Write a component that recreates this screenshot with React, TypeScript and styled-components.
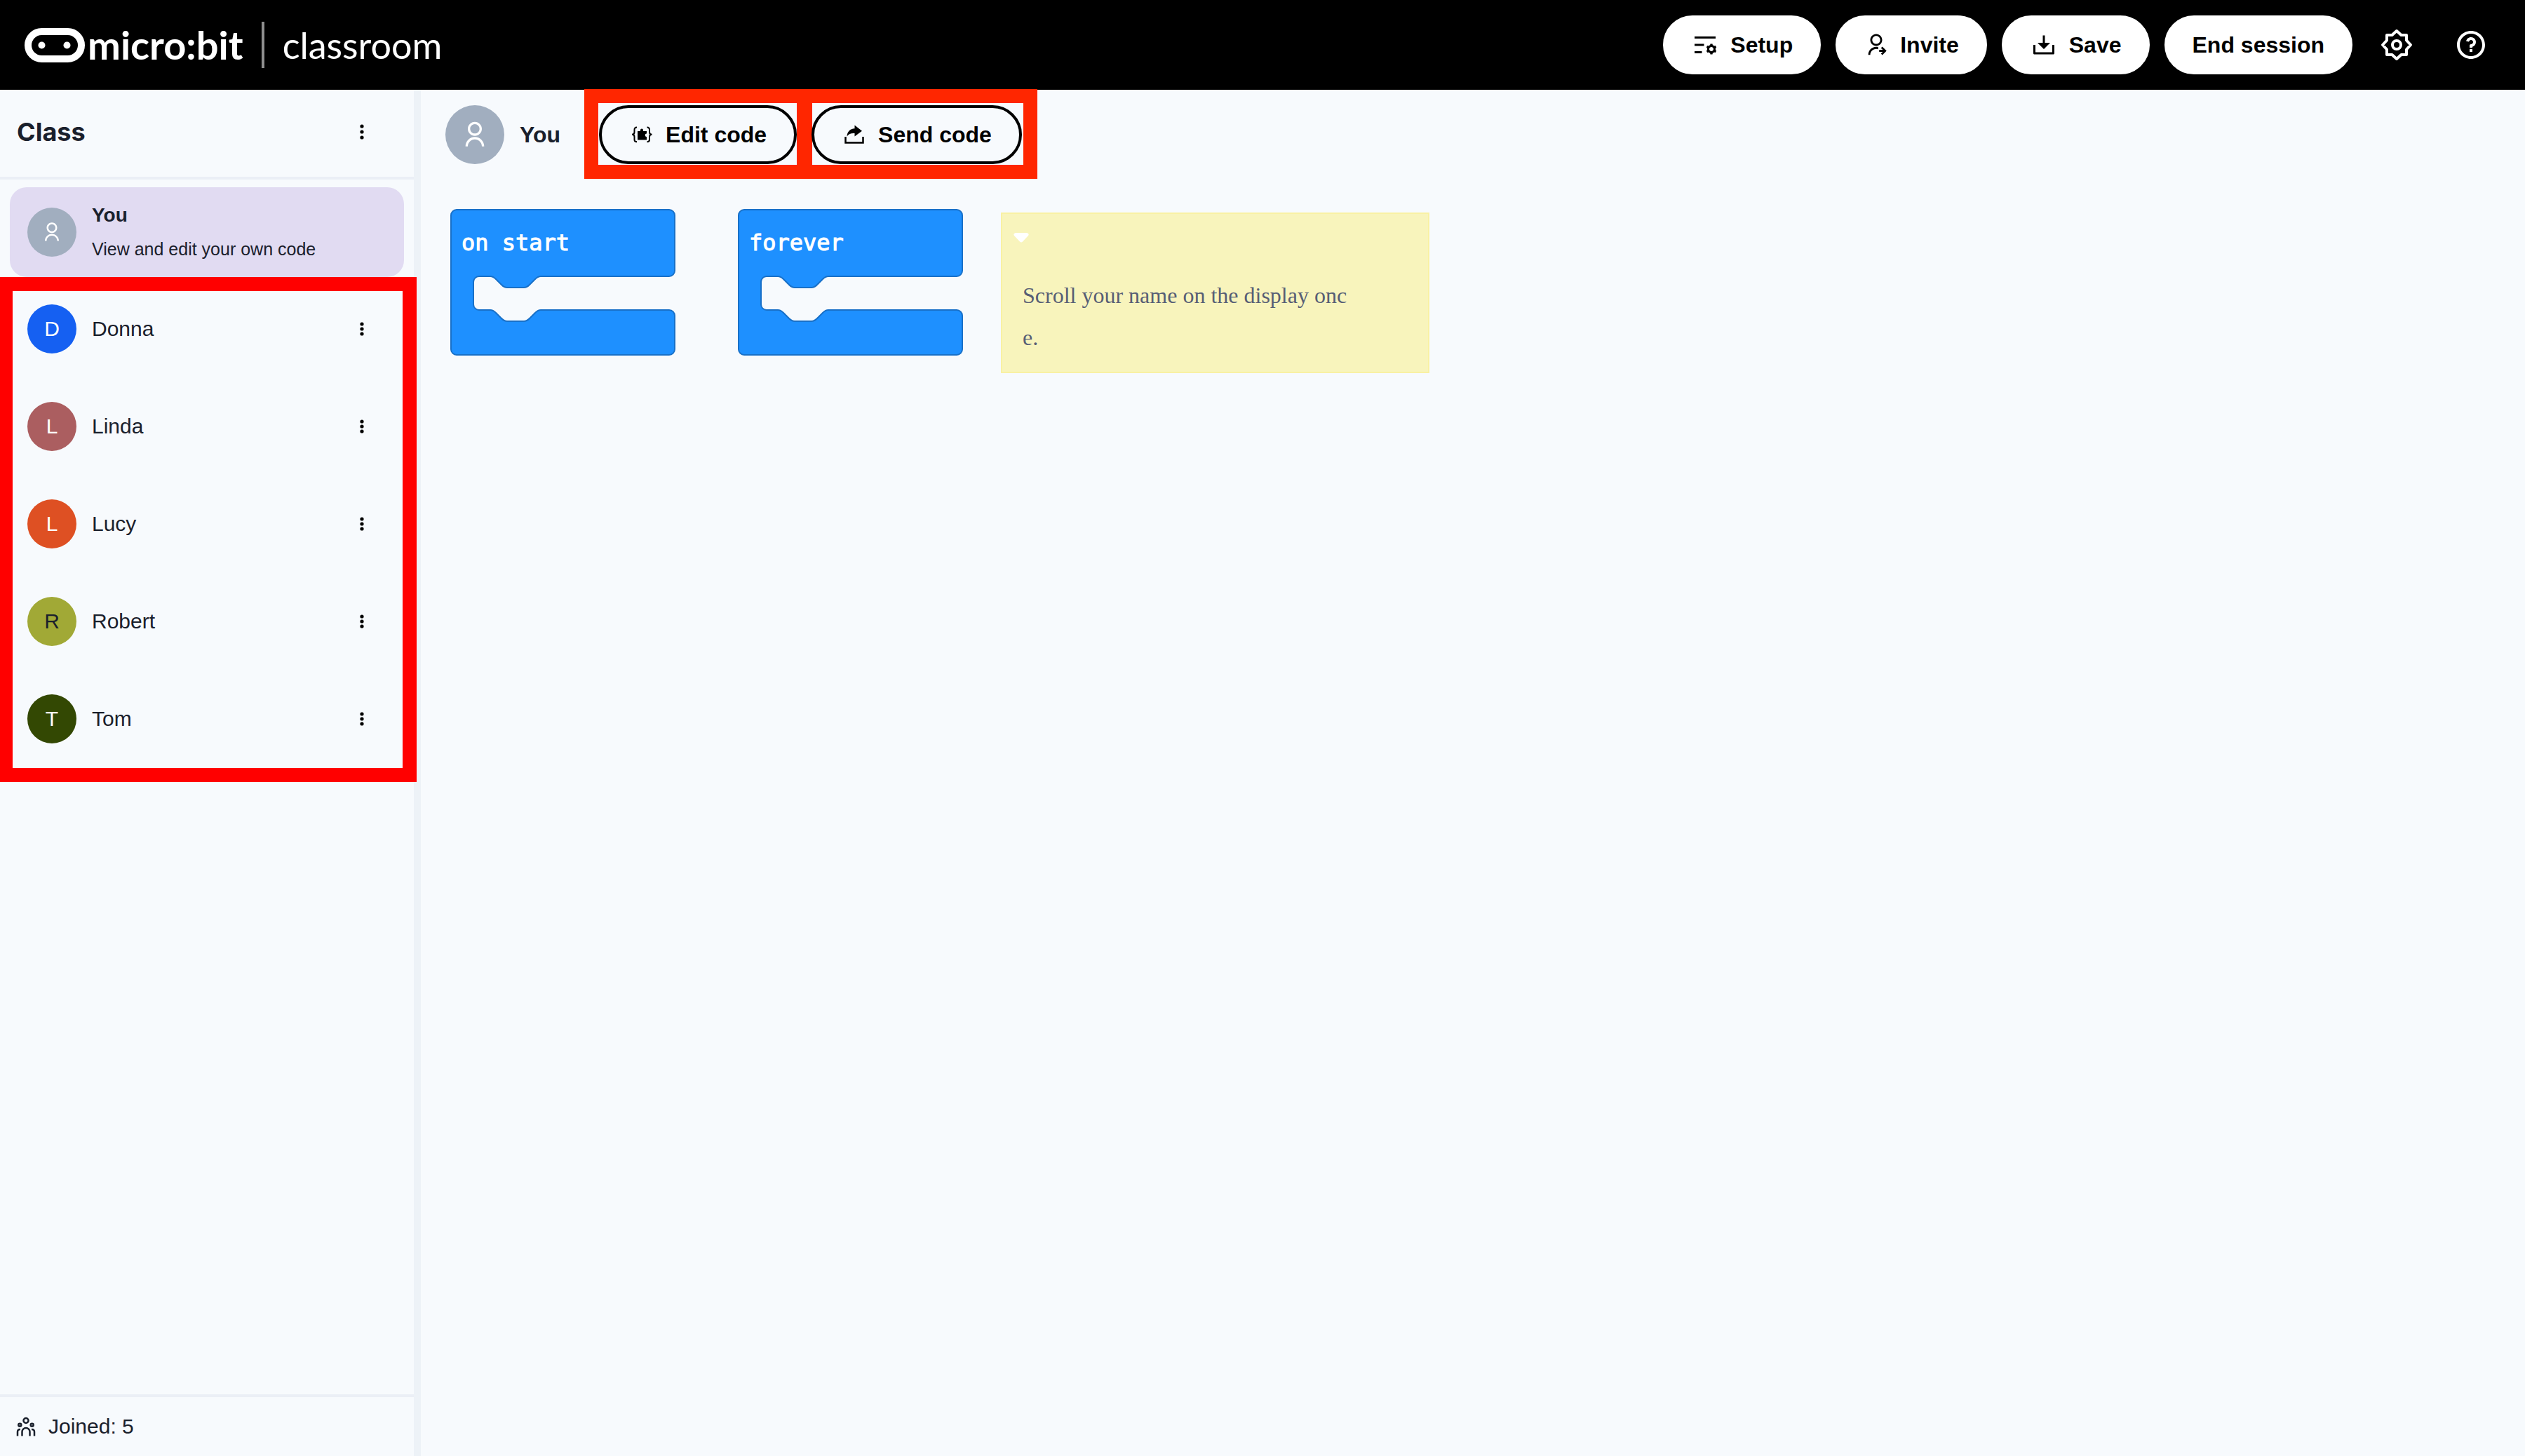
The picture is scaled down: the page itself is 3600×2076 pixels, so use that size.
import React from "react";
import styled, { createGlobalStyle } from "styled-components";
import {
  RiListSettingsLine,
  RiUserSharedLine,
  RiDownload2Line,
  RiQuestionLine,
  RiUserLine,
} from "react-icons/ri";

const GlobalStyle = createGlobalStyle`
  * { box-sizing: border-box; }
  body {
    margin: 0;
    background: #f7fafd;
    color: #1a202c;
    font-family: "Liberation Sans", Arial, sans-serif;
    font-size: 30px;
  }
  h1, h2, h3, p, ul { margin: 0; padding: 0; }
  button { font: inherit; color: inherit; cursor: pointer; }
  svg { display: block; flex: none; }
`;

const Page = styled.div`
  min-height: 100vh;
  display: flex;
  flex-direction: column;
`;

const Header = styled.header`
  height: 128px;
  padding: 0 35px;
  display: flex;
  align-items: center;
  justify-content: space-between;
  background: #000;
  color: #fff;
`;

const Brand = styled.a`
  display: flex;
  align-items: center;
  color: #fff;
  text-decoration: none;
  font-family: Lato, sans-serif;
`;

const Wordmark = styled.span`
  margin-left: 4px;
  padding-right: 26px;
  font-size: 56px;
  line-height: 66px;
  font-weight: 700;
  border-right: 4px solid #8f8f8f;
`;

const Product = styled.span`
  margin-left: 26px;
  font-size: 52px;
  line-height: 60px;
`;

const Actions = styled.nav`
  display: flex;
  align-items: center;
  gap: 21px;
`;

const PillButton = styled.button<{ $outline?: boolean }>`
  height: 84px;
  padding: 0 ${(p) => (p.$outline ? 39 : 36)}px;
  display: flex;
  align-items: center;
  gap: 16px;
  border: 4px solid ${(p) => (p.$outline ? "#000" : "#fff")};
  border-radius: 42px;
  background: ${(p) => (p.$outline ? "transparent" : "#fff")};
  color: #000;
  font-size: 32px;
  font-weight: 700;
  white-space: nowrap;
`;

const PillIcon = styled.span<{ $narrow?: boolean }>`
  width: ${(p) => (p.$narrow ? 36 : 40)}px;
  display: flex;
  justify-content: center;
`;

const IconButtons = styled.div`
  display: flex;
  gap: 22px;
`;

const IconButton = styled.button`
  width: 84px;
  height: 84px;
  padding: 0;
  display: flex;
  align-items: center;
  justify-content: center;
  border: 0;
  background: transparent;
`;

const Body = styled.div`
  flex: 1;
  display: flex;
`;

const Sidebar = styled.aside`
  width: 600px;
  flex: none;
  display: flex;
  flex-direction: column;
  border-right: 10px solid #edf2f7;
`;

const SidebarHeader = styled.div`
  height: 128px;
  padding: 0 32px 4px 24px;
  display: flex;
  align-items: center;
  justify-content: space-between;
  border-bottom: 4px solid #ebeff6;
`;

const SidebarTitle = styled.h2`
  font-family: Inter, sans-serif;
  font-size: 36px;
  font-weight: 700;
`;

const Avatar = styled.span<{ $color: string; $dark?: boolean; $large?: boolean }>`
  width: ${(p) => (p.$large ? 84 : 70)}px;
  height: ${(p) => (p.$large ? 84 : 70)}px;
  flex: none;
  display: flex;
  align-items: center;
  justify-content: center;
  border-radius: 50%;
  background: ${(p) => p.$color};
  color: ${(p) => (p.$dark ? "#1a202c" : "#fff")};
`;

const SelfCard = styled.button`
  height: 128px;
  margin: 11px 14px 0;
  padding: 0 25px;
  display: flex;
  align-items: center;
  gap: 22px;
  border: 0;
  border-radius: 24px;
  background: #e1dbf2;
  text-align: left;
`;

const SelfText = styled.span`
  display: flex;
  flex-direction: column;
  gap: 12px;
`;

const SelfName = styled.strong`
  font-size: 28px;
  line-height: 36px;
`;

const SelfHint = styled.span`
  font-size: 25px;
  line-height: 36px;
`;

const Students = styled.ul`
  position: relative;
  height: 720px;
  padding: 4px 32px 0 39px;
  list-style: none;
  &::after {
    content: "";
    position: absolute;
    inset: 0 -4px 0 -2px;
    border: 20px solid #f00;
    pointer-events: none;
  }
`;

const Student = styled.li`
  height: 139px;
  display: flex;
  align-items: center;
  gap: 22px;
`;

const StudentName = styled.span`
  flex: 1;
`;

const SidebarFooter = styled.div`
  height: 88px;
  margin-top: auto;
  padding: 0 20px;
  display: flex;
  align-items: center;
  gap: 17px;
  border-top: 4px solid #ebeff6;
`;

const Main = styled.main`
  flex: 1;
  min-width: 0;
`;

const Toolbar = styled.div`
  padding: 22px 35px;
  display: flex;
  align-items: center;
`;

const ToolbarName = styled.h1`
  margin: 0 55px 0 22px;
  font-size: 32px;
`;

const ToolbarActions = styled.div`
  display: flex;
  gap: 21px;
`;

const Highlight = styled.div`
  position: relative;
  &::after {
    content: "";
    position: absolute;
    inset: -23px -22px -21px -21px;
    border: 20px solid #ff2600;
    pointer-events: none;
  }
`;

const Workspace = styled.div`
  padding: 42px;
  display: flex;
  align-items: flex-start;
`;

const BlockBox = styled.div`
  position: relative;
  width: 321px;
  height: 209px;
  margin-right: 89px;
  padding: 27px 16px;
  color: #fff;
  font-family: "DejaVu Sans Mono", monospace;
  font-size: 32px;
  line-height: 42px;
  -webkit-text-stroke: 1px #fff;
`;

const BlockShape = styled.svg`
  position: absolute;
  inset: 0;
`;

const BlockLabel = styled.span`
  position: relative;
`;

const Comment = styled.section`
  width: 611px;
  margin: 5px 0 0 -35px;
  padding: 27px 29px 9px;
  border: 2px solid #f9f1a4;
  background: #f8f4bc;
  color: #575e75;
`;

const CollapseButton = styled.button`
  display: block;
  height: 14px;
  margin: 0 0 45px -13px;
  padding: 0;
  border: 0;
  background: transparent;
`;

const CommentText = styled.p`
  width: 468px;
  padding-bottom: 10px;
  font-family: "Liberation Serif", "Times New Roman", serif;
  font-size: 32px;
  line-height: 60px;
  word-break: break-all;
`;

const Dots = ({ step = 7 }: { step?: number }) => (
  <svg width="12" height="28" viewBox="0 0 12 28" fill="#000">
    <circle cx="6" cy={14 - step} r="2.6" />
    <circle cx="6" cy="14" r="2.6" />
    <circle cx="6" cy={14 + step} r="2.6" />
  </svg>
);

const LogoMark = () => (
  <svg width="86" height="50" viewBox="0 0 86 50">
    <rect x="5" y="6" width="76" height="39" rx="19.5" fill="none" stroke="#fff" strokeWidth="10" />
    <circle cx="24.5" cy="25.500" r="5" fill="#fff" />
    <circle cx="60.5" cy="25.500" r="5" fill="#fff" />
  </svg>
);

const GearIcon = () => (
  <svg width="48" height="48" viewBox="0 0 48 48" fill="none" stroke="#fff" strokeWidth="4" strokeLinejoin="round">
    <path d="M24 4 30.5 10H38V17.500L44 24 38 30.500V38H30.500L24 44 17.500 38H10V30.500L4 24 10 17.500V10H17.500Z" />
    <circle cx="24" cy="24" r="6" />
  </svg>
);

const EditCodeIcon = () => (
  <svg width="36" height="36" viewBox="0 0 36 36">
    <g fill="none" stroke="#000" strokeWidth="2">
      <path d="M11 7.500C8 7.500 7.500 9 7.500 11V14.500C7.500 16.500 6.500 17.800 4 17.800C6.500 17.800 7.500 19 7.500 21V25C7.500 27 8 28.300 11 28.300" />
      <path d="M25.500 7.500C28.500 7.500 29 9 29 11V14.500C29 16.500 30 17.800 32.500 17.800C30 17.800 29 19 29 21V25C29 27 28.500 28.300 25.500 28.300" />
    </g>
    <path d="M12 13H16V11.500A2 2 0 0 1 20 11.500V13H25V16.500H24.500A2.300 2.300 0 0 0 24.500 21H25V25.500H12Z" />
  </svg>
);

const SendCodeIcon = () => (
  <svg width="36" height="36" viewBox="0 0 36 36">
    <path d="M5.500 21V29.500H30.500V21" fill="none" stroke="#000" strokeWidth="2.500" />
    <path d="M18.500 4.500 29 12.700 18.500 20.500V16C13.500 15.600 10 17 7.500 20.500C8 13.500 12 9.500 18.500 9.200Z" />
  </svg>
);

const GroupIcon = () => (
  <svg width="32" height="32" viewBox="0 0 32 32" fill="none" stroke="#1a202c" strokeWidth="2.500">
    <circle cx="17" cy="7.500" r="3.500" />
    <circle cx="8.300" cy="13.800" r="2" />
    <circle cx="25.700" cy="13.800" r="2" />
    <path d="M11.500 29.500V23.500a5.500 5.500 0 0 1 11 0V29.500M5 29.500V23.500q0-3.500 4-3.500M29 29.500V23.500q0-3.500-4-3.500" />
  </svg>
);

const Block = ({ label }: { label: string }) => (
  <BlockBox>
    <BlockShape width="321" height="209" viewBox="0 0 321 209" fill="#1e90ff" stroke="#1870c8" strokeWidth="2">
      <path d="M9 1H312a8 8 0 0 1 8 8V88a8 8 0 0 1-8 8H129c-4 0-6 2-8 4l-8 8c-2 2-4 4-8 4h-24c-4 0-6-2-8-4l-8-8c-2-2-4-4-8-4h-16a8 8 0 0 0-8 8v32a8 8 0 0 0 8 8h16c4 0 6 2 8 4l8 8c2 2 4 4 8 4h24c4 0 6-2 8-4l8-8c2-2 4-4 8-4H312a8 8 0 0 1 8 8V200a8 8 0 0 1-8 8H9a8 8 0 0 1-8-8V9a8 8 0 0 1 8-8z" />
    </BlockShape>
    <BlockLabel>{label}</BlockLabel>
  </BlockBox>
);

const students = [
  { name: "Donna", color: "#1560f2" },
  { name: "Linda", color: "#ab5e60" },
  { name: "Lucy", color: "#de5023" },
  { name: "Robert", color: "#a1a936", dark: true },
  { name: "Tom", color: "#334803" },
];

export default function App() {
  return (
    <Page>
      <GlobalStyle />
      <Header>
        <Brand href="#">
          <LogoMark />
          <Wordmark>micro:bit</Wordmark>
          <Product>classroom</Product>
        </Brand>
        <Actions>
          <PillButton>
            <PillIcon><RiListSettingsLine size={36} /></PillIcon>
            Setup
          </PillButton>
          <PillButton>
            <PillIcon $narrow><RiUserSharedLine size={34} /></PillIcon>
            Invite
          </PillButton>
          <PillButton>
            <PillIcon><RiDownload2Line size={36} /></PillIcon>
            Save
          </PillButton>
          <PillButton>End session</PillButton>
          <IconButtons>
            <IconButton aria-label="Settings"><GearIcon /></IconButton>
            <IconButton aria-label="Help"><RiQuestionLine size={48} color="#fff" /></IconButton>
          </IconButtons>
        </Actions>
      </Header>
      <Body>
        <Sidebar>
          <SidebarHeader>
            <SidebarTitle>Class</SidebarTitle>
            <IconButton aria-label="Class options"><Dots step={8} /></IconButton>
          </SidebarHeader>
          <SelfCard>
            <Avatar $color="#a1aebf"><RiUserLine size={30} /></Avatar>
            <SelfText>
              <SelfName>You</SelfName>
              <SelfHint>View and edit your own code</SelfHint>
            </SelfText>
          </SelfCard>
          <Students>
            {students.map((s) => (
              <Student key={s.name}>
                <Avatar $color={s.color} $dark={s.dark}>{s.name[0]}</Avatar>
                <StudentName>{s.name}</StudentName>
                <IconButton aria-label={`Options for ${s.name}`}><Dots /></IconButton>
              </Student>
            ))}
          </Students>
          <SidebarFooter>
            <GroupIcon />
            <span>Joined: 5</span>
          </SidebarFooter>
        </Sidebar>
        <Main>
          <Toolbar>
            <Avatar $color="#a1aebf" $large><RiUserLine size={40} /></Avatar>
            <ToolbarName>You</ToolbarName>
            <ToolbarActions>
              <Highlight>
                <PillButton $outline>
                  <PillIcon $narrow><EditCodeIcon /></PillIcon>
                  Edit code
                </PillButton>
              </Highlight>
              <Highlight>
                <PillButton $outline>
                  <PillIcon $narrow><SendCodeIcon /></PillIcon>
                  Send code
                </PillButton>
              </Highlight>
            </ToolbarActions>
          </Toolbar>
          <Workspace>
            <Block label="on start" />
            <Block label="forever" />
            <Comment>
              <CollapseButton aria-label="Collapse comment">
                <svg width="22" height="14" viewBox="0 0 22 14" fill="#fff">
                  <path d="M3 0H19Q23 1 21 4L13 12.500Q11 14.500 9 12.500L1 4Q-1 1 3 0Z" />
                </svg>
              </CollapseButton>
              <CommentText>Scroll your name on the display once.</CommentText>
            </Comment>
          </Workspace>
        </Main>
      </Body>
    </Page>
  );
}
